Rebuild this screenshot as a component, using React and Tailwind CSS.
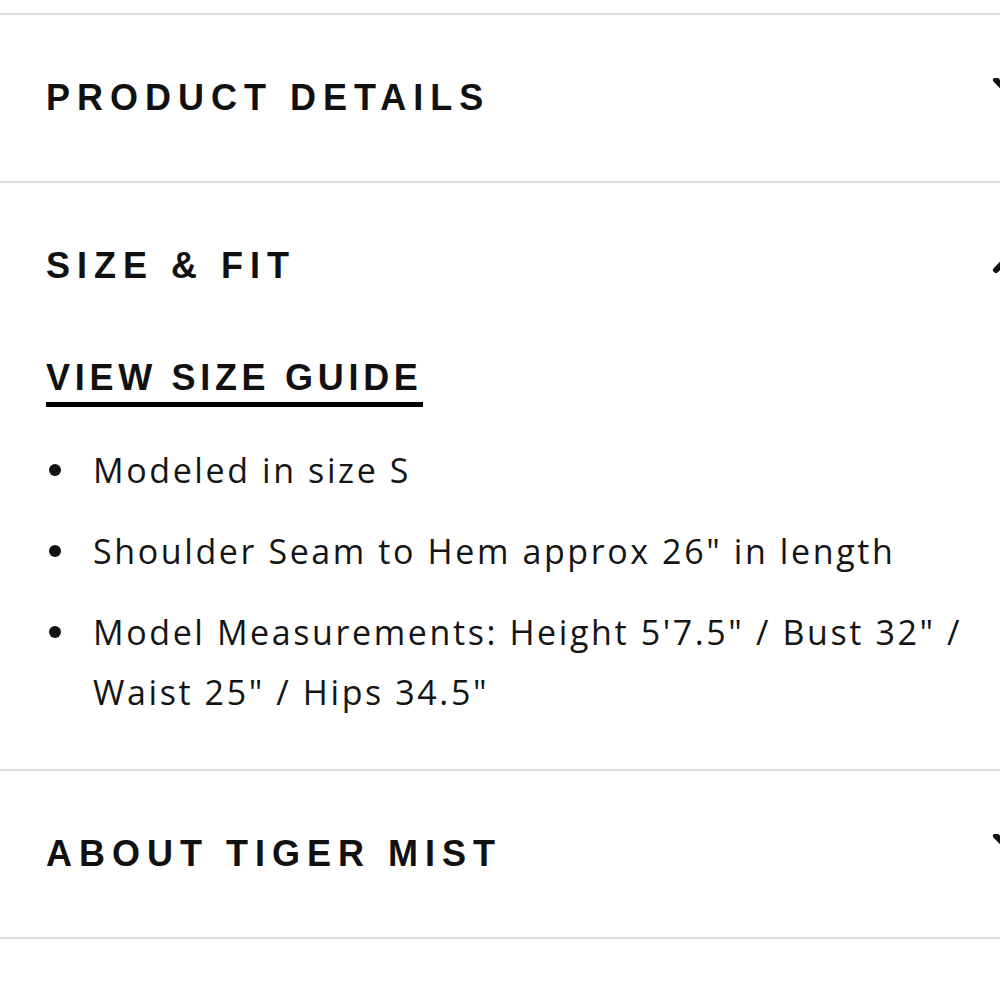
import React from "react";

const headingFont = { fontFamily: '"Liberation Sans", Arial, sans-serif' };
const bodyFont = { fontFamily: '"Open Sans", "Liberation Sans", sans-serif' };

const Chevron = ({ open }) => (
  <svg
    viewBox="0 0 40 40"
    className="w-[40px] h-[40px] shrink-0 -mr-[30px]"
    fill="none"
    stroke="#111"
    strokeWidth="6"
    strokeLinecap="round"
    strokeLinejoin="round"
  >
    {open ? <path d="M6 24 L20 10 L34 24" /> : <path d="M6 2 L20 16 L34 2" />}
  </svg>
);

const Heading = ({ children, open }) => (
  <div className="flex items-center justify-between">
    <h3
      className="text-[36px] leading-[46px] font-bold uppercase tracking-[7px] text-[#111]"
      style={headingFont}
    >
      {children}
    </h3>
    <Chevron open={open} />
  </div>
);

const details = [
  "Modeled in size S",
  'Shoulder Seam to Hem approx 26" in length',
  "Model Measurements: Height 5'7.5\" / Bust 32\" / Waist 25\" / Hips 34.5\"",
];

export default function App() {
  return (
    <div className="w-[1000px] min-h-[1000px] bg-white overflow-hidden pt-[13px]">
      <div className="border-t-2 border-[#dcdcdc]">
        <section className="pl-[46px] pt-[60px] pb-[60px] border-b-2 border-[#dcdcdc]">
          <Heading>Product Details</Heading>
        </section>

        <section className="pl-[46px] pt-[60px] pb-[47px] border-b-2 border-[#dcdcdc]">
          <Heading open>Size &amp; Fit</Heading>

          <div className="mt-[71px]">
            <a
              href="#"
              className="inline-block text-[36px] leading-[36px] font-bold uppercase tracking-[4.7px] text-[#111] pb-[6px] border-b-[5px] border-black"
              style={headingFont}
            >
              View Size Guide
            </a>
          </div>

          <ul className="mt-[33px] flex flex-col gap-[21px] pr-[30px]" style={bodyFont}>
            {details.map((d) => (
              <li key={d} className="flex items-start text-[34px] leading-[60px] tracking-[2.6px] text-[#151515]">
                <span className="w-[47px] shrink-0 flex items-center h-[60px]">
                  <span className="w-[12px] h-[12px] rounded-full bg-[#111] ml-[3px]"></span>
                </span>
                <span>{d}</span>
              </li>
            ))}
          </ul>
        </section>

        <section className="pl-[46px] pt-[60px] pb-[60px] border-b-2 border-[#dcdcdc]">
          <Heading>About Tiger Mist</Heading>
        </section>
      </div>
    </div>
  );
}
